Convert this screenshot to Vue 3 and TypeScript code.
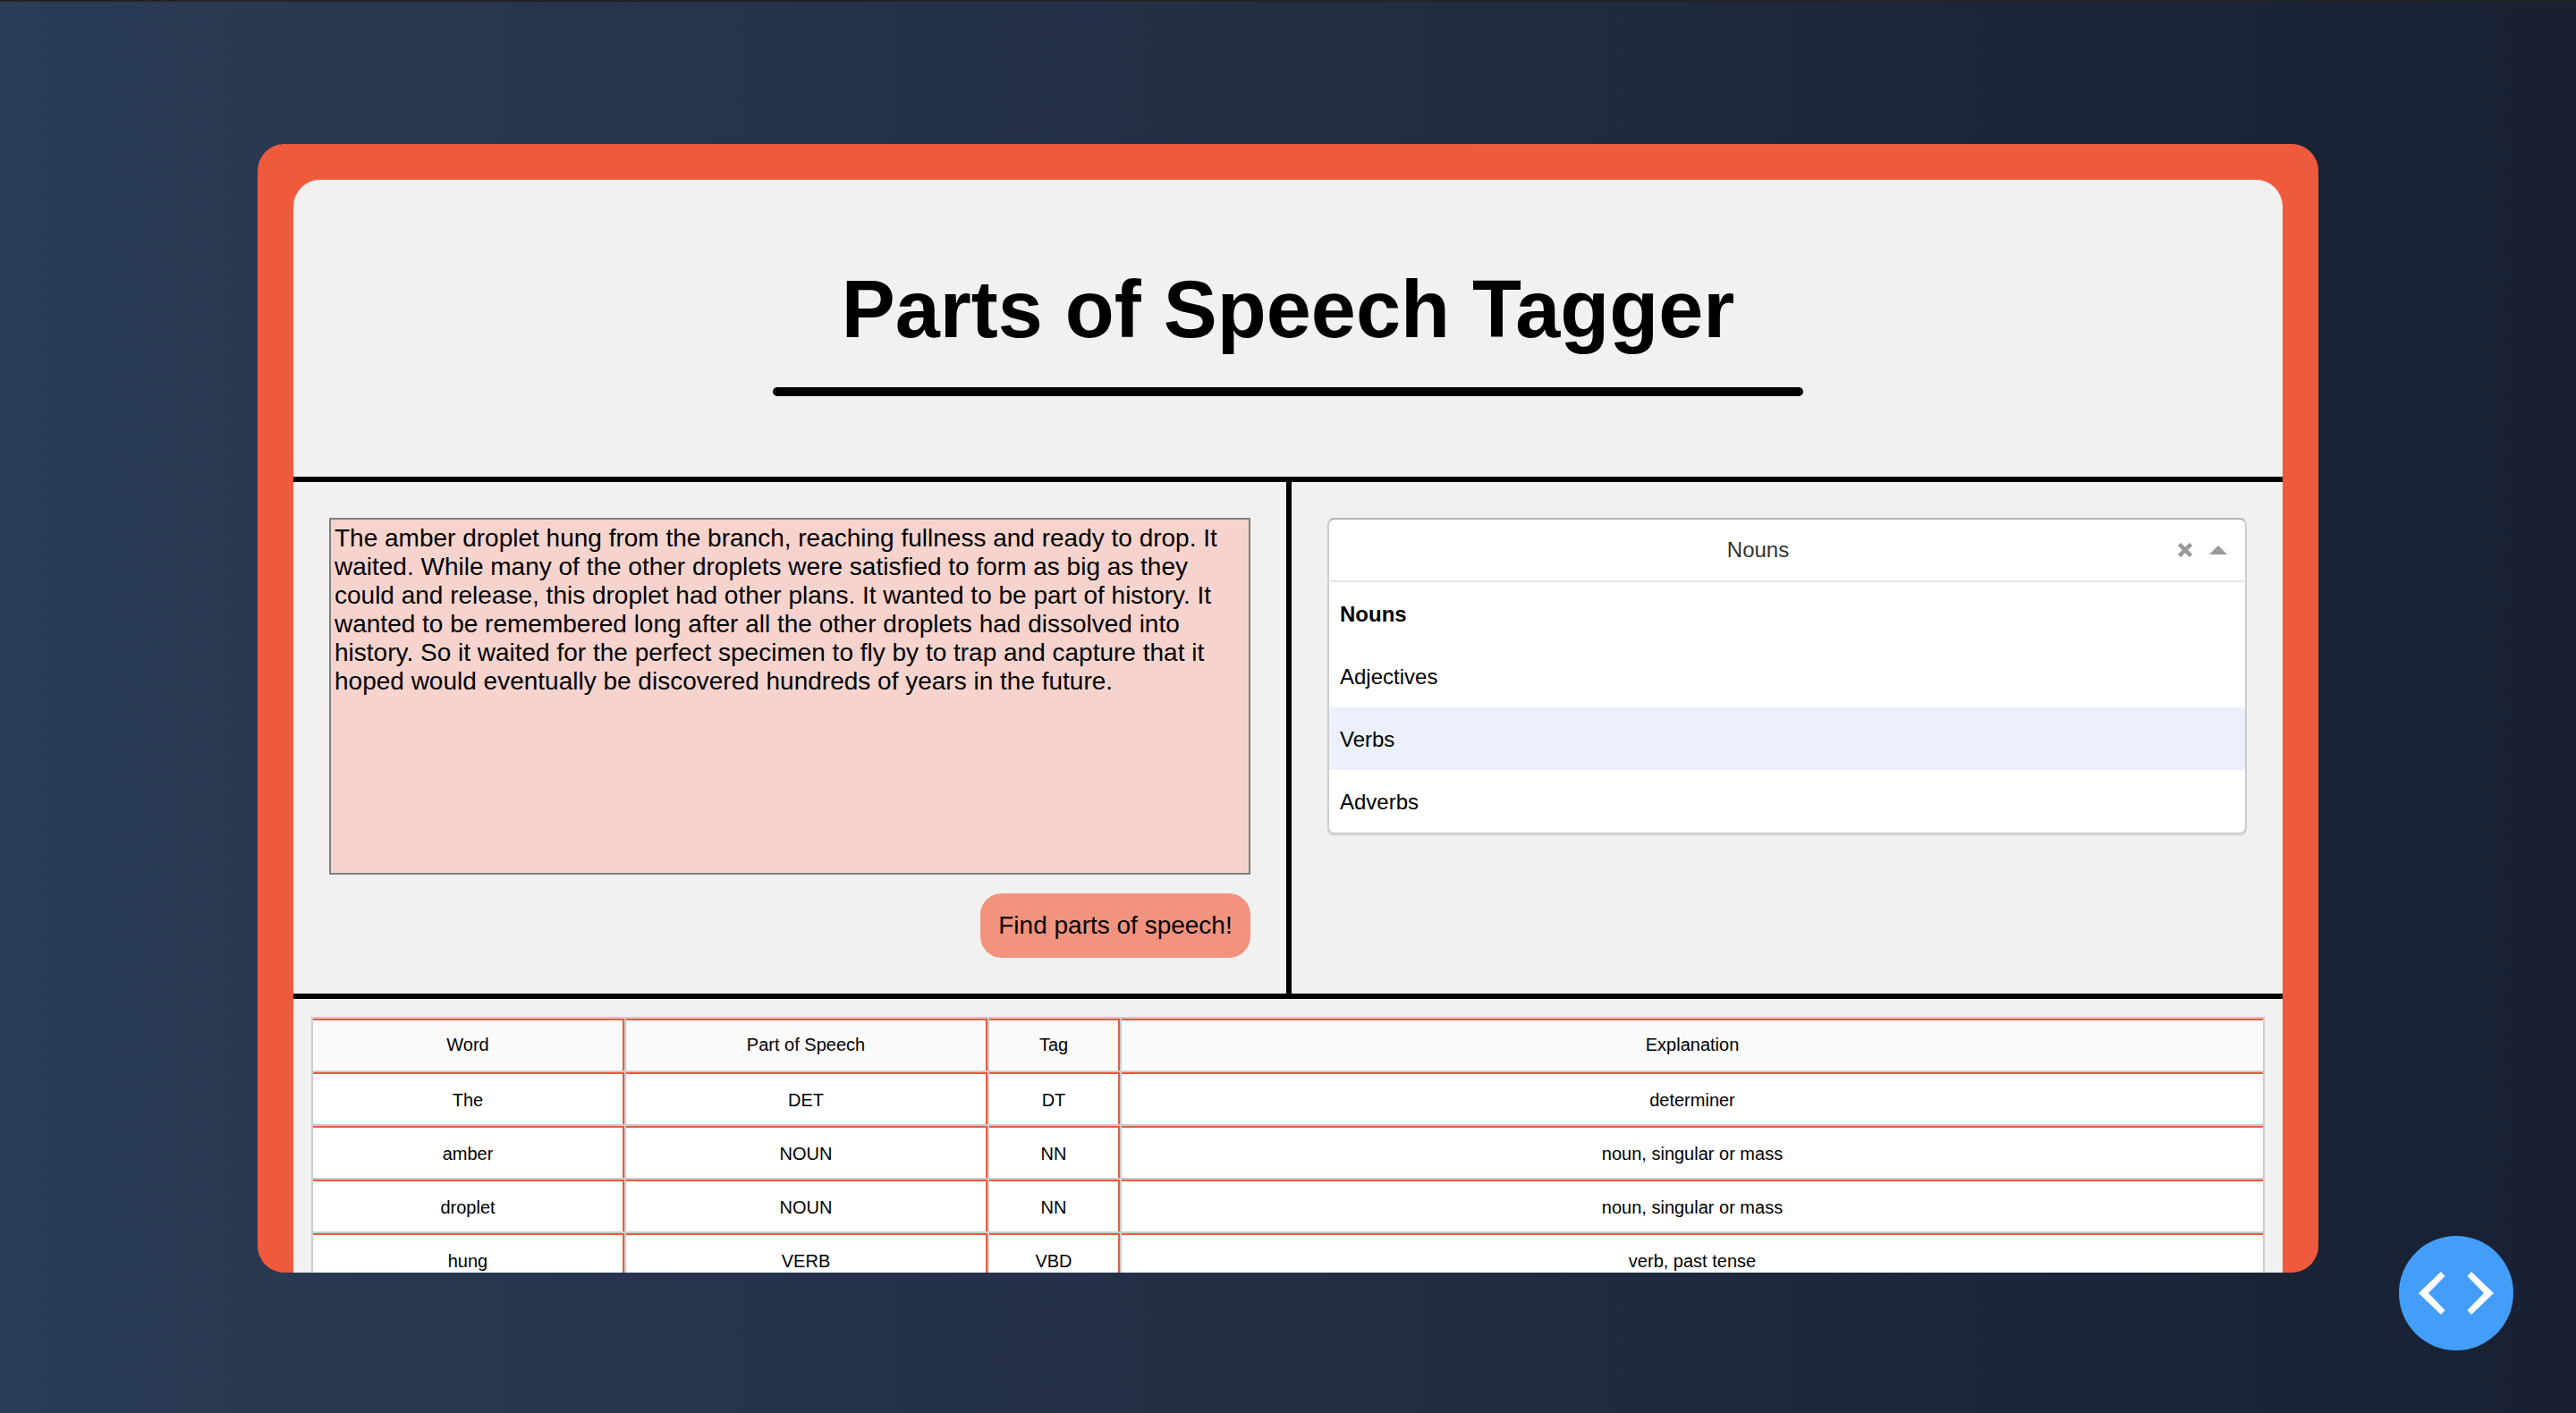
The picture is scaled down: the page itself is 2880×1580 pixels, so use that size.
<template>
  <main class="page">
    <section class="frame">
      <div class="app">
        <header class="title-block">
          <h1>Parts of Speech Tagger</h1>
          <div class="rule"></div>
        </header>

        <div class="panels">
          <div class="panel input-panel">
            <textarea v-model="text" class="text-input"></textarea>
            <button class="find-btn" type="button">Find parts of speech!</button>
          </div>

          <div class="panel select-panel">
            <div class="select">
              <div class="select-control">
                <span class="select-value">{{ selected }}</span>
                <svg class="clear-icon" width="16" height="16" viewBox="0 0 16 16">
                  <path d="M1.500 1.500l13 13M14.500 1.500l-13 13" />
                </svg>
                <svg class="caret-icon" width="20" height="10" viewBox="0 0 20 10">
                  <path d="M10 0L20 10H0z" />
                </svg>
              </div>
              <ul class="select-menu">
                <li
                  v-for="option in options"
                  :key="option"
                  class="select-option"
                  :class="{ active: option === selected, focused: option === focused }"
                >
                  {{ option }}
                </li>
              </ul>
            </div>
          </div>
        </div>

        <div class="table-wrap">
          <table class="pos-table">
            <thead>
              <tr>
                <th class="col-word">Word</th>
                <th class="col-pos">Part of Speech</th>
                <th class="col-tag">Tag</th>
                <th>Explanation</th>
              </tr>
            </thead>
            <tbody>
              <tr v-for="(row, i) in rows" :key="i">
                <td>{{ row.word }}</td>
                <td>{{ row.pos }}</td>
                <td>{{ row.tag }}</td>
                <td>{{ row.explanation }}</td>
              </tr>
            </tbody>
          </table>
        </div>
      </div>
    </section>

    <button class="code-btn" type="button" aria-label="View code">
      <svg width="128" height="128" viewBox="0 0 128 128">
        <path d="M22 64L47 40l4.500 5L33 64l18.500 19L47 88z" />
        <path d="M106 64L81 40l-4.500 5L95 64 76.500 83 81 88z" />
      </svg>
    </button>
  </main>
</template>

<script setup lang="ts">
import { ref } from "vue";

const text = ref(
  "The amber droplet hung from the branch, reaching fullness and ready to drop. It waited. While many of the other droplets were satisfied to form as big as they could and release, this droplet had other plans. It wanted to be part of history. It wanted to be remembered long after all the other droplets had dissolved into history. So it waited for the perfect specimen to fly by to trap and capture that it hoped would eventually be discovered hundreds of years in the future."
);

const options = ["Nouns", "Adjectives", "Verbs", "Adverbs"];
const selected = ref("Nouns");
const focused = ref("Verbs");

const rows = [
  { word: "The", pos: "DET", tag: "DT", explanation: "determiner" },
  { word: "amber", pos: "NOUN", tag: "NN", explanation: "noun, singular or mass" },
  { word: "droplet", pos: "NOUN", tag: "NN", explanation: "noun, singular or mass" },
  { word: "hung", pos: "VERB", tag: "VBD", explanation: "verb, past tense" },
];
</script>

<style>
html,
body {
  margin: 0;
  height: 1580px;
  overflow: hidden;
  background: #182032;
}
</style>

<style scoped>
.page {
  position: relative;
  box-sizing: border-box;
  height: 1580px;
  padding-top: 159px;
  border-top: 2px solid #232323;
  background: linear-gradient(90deg, #2b3c56, #182032);
  font-family: "Liberation Sans", Arial, sans-serif;
}
.frame {
  box-sizing: border-box;
  width: 2304px;
  height: 1262px;
  margin: 0 auto;
  padding: 40px 40px 0;
  background: #f05a3c;
  border-radius: 30px;
  overflow: hidden;
}
.app {
  height: 100%;
  background: #f1f1f1;
  border-radius: 30px 30px 0 0;
  overflow: hidden;
}
.title-block {
  height: 332px;
  display: flex;
  flex-direction: column;
  align-items: center;
}
h1 {
  margin: 94px 0 0;
  font-size: 90px;
  line-height: 103px;
  font-weight: 700;
  color: #000;
}
.rule {
  width: 1152px;
  height: 10px;
  margin-top: 35px;
  background: #000;
  border-radius: 5px;
}
.panels {
  display: flex;
  height: 572px;
  border-top: 6px solid #000;
  border-bottom: 6px solid #000;
}
.panel {
  box-sizing: border-box;
  padding: 40px;
}
.input-panel {
  width: 1116px;
  border-right: 6px solid #000;
  display: flex;
  flex-direction: column;
  align-items: flex-end;
}
.select-panel {
  flex: 1;
}
.text-input {
  box-sizing: border-box;
  display: block;
  width: 1030px;
  height: 399px;
  margin: 0;
  padding: 5px 4px 2px;
  border: 2px solid #808080;
  outline: none;
  resize: none;
  background: #f6d4cd;
  color: #000;
  font-family: inherit;
  font-size: 28px;
}
.find-btn {
  width: 302px;
  height: 72px;
  margin-top: 21px;
  padding: 0;
  border: none;
  border-radius: 24px;
  background: #f2937e;
  color: #000;
  font-family: inherit;
  font-size: 28px;
}
.select {
  position: relative;
  width: 1028px;
  font-size: 24px;
}
.select-control {
  box-sizing: border-box;
  height: 72px;
  display: flex;
  align-items: center;
  padding-right: 20px;
  background: #fff;
  border: 2px solid #ccc;
  border-top-color: #b3b3b3;
  border-bottom-color: #e6e6e6;
  border-radius: 8px 8px 0 0;
}
.select-value {
  flex: 1;
  padding-left: 10px;
  text-align: center;
  color: #333;
}
.clear-icon {
  margin: 0 19px 0 0;
}
.clear-icon path {
  fill: none;
  stroke: #999;
  stroke-width: 4.500;
}
.caret-icon path {
  fill: #999;
}
.select-menu {
  position: absolute;
  top: 100%;
  left: 0;
  right: 0;
  margin: 0;
  padding: 0;
  list-style: none;
  background: #fff;
  border: 2px solid #ccc;
  border-top: none;
  border-radius: 0 0 8px 8px;
  box-shadow: 0 2px 0 #e0e0e0;
  overflow: hidden;
}
.select-option {
  height: 70px;
  line-height: 71px;
  padding-left: 12px;
  color: #000;
}
.select-option.active {
  font-weight: 700;
}
.select-option.focused {
  background: #ebf0fb;
}
.table-wrap {
  padding: 20px;
}
.pos-table {
  width: 2184px;
  table-layout: fixed;
  border-collapse: separate;
  border-spacing: 2px;
  background: #ccc;
  font-size: 20px;
  color: #000;
}
.col-word {
  width: 348px;
}
.col-pos {
  width: 404px;
}
.col-tag {
  width: 146px;
}
th,
td {
  box-sizing: border-box;
  height: 58px;
  padding: 0;
  text-align: center;
  font-weight: 400;
  background: #fff;
  border-top: 2px solid #f05a3c;
  border-right: 2px solid #f05a3c;
}
td {
  padding-top: 3px;
}
th {
  padding-bottom: 2px;
  background: #fafafa;
}
th:last-child,
td:last-child {
  border-right: none;
}
.code-btn {
  position: absolute;
  right: 70px;
  bottom: 70px;
  width: 128px;
  height: 128px;
  padding: 0;
  border: none;
  border-radius: 50%;
  background: #439efa;
}
.code-btn svg {
  display: block;
}
.code-btn path {
  fill: #fff;
}
</style>
